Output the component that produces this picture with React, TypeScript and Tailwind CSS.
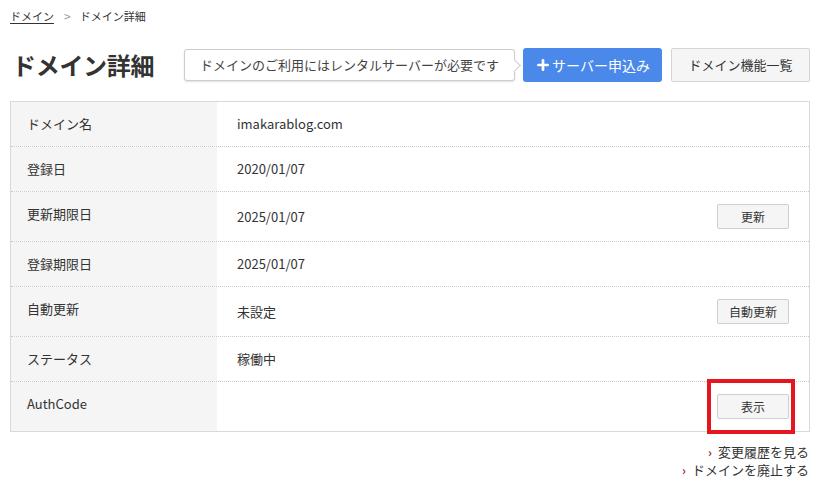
import { Plus } from "lucide-react";

const font = { fontFamily: '"Noto Sans CJK JP", "Noto Sans", sans-serif' };

type Row = {
  label: string;
  value?: string;
  button?: string;
  marked?: boolean;
};

const rows: Row[] = [
  { label: "ドメイン名", value: "imakarablog.com" },
  { label: "登録日", value: "2020/01/07" },
  { label: "更新期限日", value: "2025/01/07", button: "更新" },
  { label: "登録期限日", value: "2025/01/07" },
  { label: "自動更新", value: "未設定", button: "自動更新" },
  { label: "ステータス", value: "稼働中" },
  { label: "AuthCode", button: "表示", marked: true },
];

function SmallButton({ text, marked }: { text: string; marked?: boolean }) {
  return (
    <span className="relative inline-flex">
      <button className="w-[72px] h-[25px] bg-[#f5f5f5] border border-[#cfcfcf] rounded-[2px] text-[12px] text-[#333] leading-none flex items-center justify-center">
        {text}
      </button>
      {marked && (
        <span className="absolute -left-[10px] -right-[6px] -top-[15px] -bottom-[15px] border-[4px] border-[#e5161f] pointer-events-none"></span>
      )}
    </span>
  );
}

export default function App() {
  return (
    <div className="w-[824px] h-[490px] bg-white text-[#333] pl-[10px] pr-[14px] overflow-hidden" style={font}>
      {/* breadcrumb */}
      <div className="pt-[9px] flex items-center text-[11px] leading-[14px]">
        <span className="underline underline-offset-2 text-[#333]">ドメイン</span>
        <span className="ml-[10px] mr-[9px] text-[#999] text-[12px]">&gt;</span>
        <span>ドメイン詳細</span>
      </div>

      {/* header */}
      <div className="mt-[25px] h-[34px] flex items-center justify-between">
        <h1 className="ml-[2px] text-[24px] font-bold leading-none tracking-[-0.3px] text-[#333]">
          ドメイン詳細
        </h1>
        <div className="flex items-center">
          <div className="relative w-[331px] h-[32px] border border-[#ccc] rounded-[3px] bg-white shadow-[0_1px_2px_rgba(0,0,0,0.12)] flex items-center justify-center text-[13px] text-[#444]">
            ドメインのご利用にはレンタルサーバーが必要です
            <span className="absolute -right-[5px] top-[11px] w-[9px] h-[9px] bg-white border-t border-r border-[#ccc] rotate-45"></span>
          </div>
          <button className="ml-[8px] w-[139px] h-[34px] bg-[#4a89ea] rounded-[3px] text-white text-[14px] flex items-center justify-center gap-[1px]">
            <Plus size={16} strokeWidth={4} />
            <span>サーバー申込み</span>
          </button>
          <button className="ml-[9px] w-[139px] h-[34px] bg-[#f5f5f5] border border-[#d5d5d5] rounded-[2px] text-[13px] text-[#333] flex items-center justify-center">
            ドメイン機能一覧
          </button>
        </div>
      </div>

      {/* table */}
      <div className="mt-[19px] border border-[#d9d9d9]">
        {rows.map((row, i) => (
          <div
            key={row.label}
            className={
              "flex " + (i < rows.length - 1 ? "border-b border-dotted border-[#c8c8c8]" : "")
            }
          >
            <div className="w-[206px] shrink-0 bg-[#f5f5f5] pl-[16px] pt-[13px] text-[13px] leading-[18px]">
              {row.label}
            </div>
            <div className="flex-1 flex items-center justify-between pl-[20px] pr-[20px] py-[12px] min-h-[43px] text-[13px] leading-[20px]">
              <span>{row.value}</span>
              {row.button && <SmallButton text={row.button} marked={row.marked} />}
            </div>
          </div>
        ))}
      </div>

      {/* links */}
      <div className="mt-[11px] flex flex-col items-end text-[13px] leading-[18px] pr-[1px]">
        <div className="flex items-center">
          <span className="text-[#a8202e] text-[12px] font-bold mr-[6px]">›</span>
          <span>変更履歴を見る</span>
        </div>
        <div className="flex items-center">
          <span className="text-[#a8202e] text-[12px] font-bold mr-[6px]">›</span>
          <span>ドメインを廃止する</span>
        </div>
      </div>
    </div>
  );
}
